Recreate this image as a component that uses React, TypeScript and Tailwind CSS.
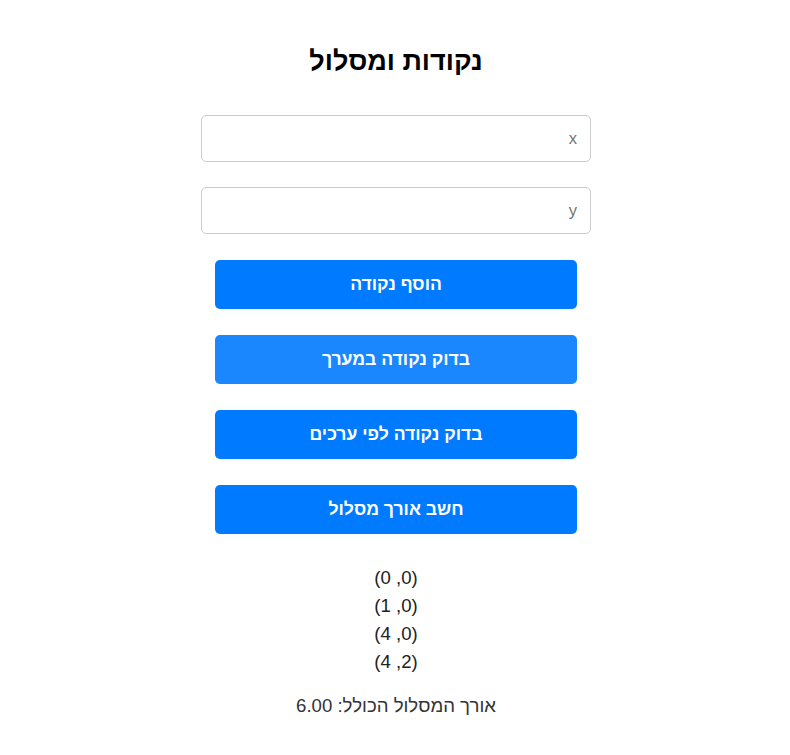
import React from "react";

export default function App() {
  const points = ["(0, 0)", "(0, 1)", "(0, 4)", "(2, 4)"];
  const buttons = ["הוסף נקודה", "בדוק נקודה במערך", "בדוק נקודה לפי ערכים", "חשב אורך מסלול"];
  return (
    <div dir="rtl" className="min-h-[755px] bg-white pl-[2px] font-['Liberation_Sans',Arial,sans-serif] text-[#222]">
      <div className="mx-auto flex w-[390px] flex-col items-center pt-[44px]">
        <h1 className="m-0 text-[27px] font-bold leading-[34px] text-black">נקודות ומסלול</h1>
        <input
          placeholder="x"
          className="mt-[37px] h-[47px] w-[390px] rounded-[5px] border border-[#cccccc] px-[13px] text-[16.6px] placeholder:text-[#757575] outline-none"
        />
        <input
          placeholder="y"
          className="mt-[25px] h-[47px] w-[390px] rounded-[5px] border border-[#cccccc] px-[13px] text-[16.6px] placeholder:text-[#757575] outline-none"
        />
        <div className="mt-[26px] flex flex-col gap-[26px]">
          {buttons.map((b, i) => (
            <button
              key={b}
              className={
                i === 1
                  ? "h-[49px] w-[362px] rounded-[5px] bg-[#1a87ff] text-[17.6px] font-bold text-white"
                  : "h-[49px] w-[362px] rounded-[5px] bg-[#007bff] text-[17.6px] font-bold text-white"
              }
            >
              {b}
            </button>
          ))}
        </div>
        <div className="mt-[30px] flex flex-col items-center text-[18.6px] leading-[28px] text-[#222]">
          {points.map((p) => (
            <div key={p}>{p}</div>
          ))}
        </div>
        <div className="mt-[18px] text-[18.6px] leading-[24px] text-[#333]">אורך המסלול הכולל: 6.00</div>
      </div>
    </div>
  );
}
